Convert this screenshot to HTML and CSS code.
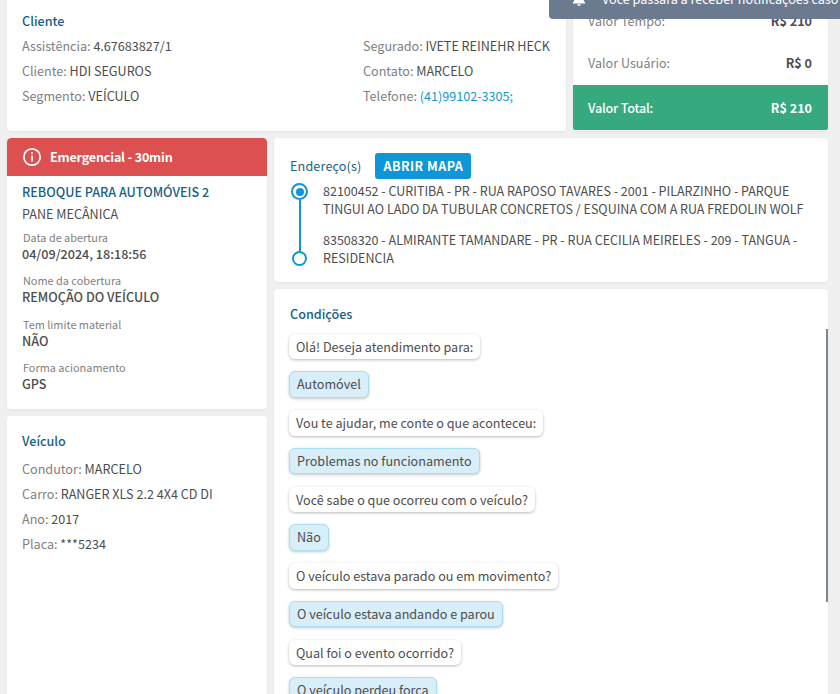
FILE: index.html
```html
<!DOCTYPE html>
<html lang="pt-BR">
<head>
<meta charset="utf-8">
<title>Atendimento</title>
<link rel="stylesheet" href="styles.css">
</head>
<body>
<div class="toast">
  <svg class="toast-icon" viewBox="0 0 16 16" width="14" height="14"><path fill="#fff" d="M8 0a1.2 1.2 0 0 0-1.2 1.2v.5A5 5 0 0 0 3 6.600c0 3.700-1.500 4.900-2 5.400v1h14v-1c-.5-.5-2-1.700-2-5.400a5 5 0 0 0-3.800-4.900v-.5A1.200 1.200 0 0 0 8 0zM6 14a2 2 0 0 0 4 0z"/></svg>
  <span class="toast-text">Você passará a receber notificações caso receba novos serviços</span>
</div>
<main class="page">
  <section class="row-top">
    <div class="card client">
      <h2 class="title">Cliente</h2>
      <div class="client-cols">
        <div class="list">
          <p class="line"><span class="lbl">Assistência:</span> 4.67683827/1</p>
          <p class="line"><span class="lbl">Cliente:</span> HDI SEGUROS</p>
          <p class="line"><span class="lbl">Segmento:</span> VEÍCULO</p>
        </div>
        <div class="list">
          <p class="line"><span class="lbl">Segurado:</span> IVETE REINEHR HECK</p>
          <p class="line"><span class="lbl">Contato:</span> MARCELO</p>
          <p class="line"><span class="lbl">Telefone:</span> <span class="phone">(41)99102-3305;</span></p>
        </div>
      </div>
    </div>
    <div class="card values">
      <div class="value-row"><span class="lbl">Valor Tempo:</span><strong>R$ 210</strong></div>
      <div class="value-row"><span class="lbl">Valor Usuário:</span><strong>R$ 0</strong></div>
      <div class="value-total"><span>Valor Total:</span><strong>R$ 210</strong></div>
    </div>
  </section>
  <section class="row-main">
    <div class="col-left">
      <div class="card service">
        <div class="urgent">
          <svg viewBox="0 0 20 20" width="20" height="20" fill="none" stroke="#fff" stroke-width="1.700"><circle cx="10" cy="10" r="8.200"/><path d="M10 9v5" stroke-linecap="round"/><circle cx="10" cy="6" r=".6" fill="#fff" stroke-width="1"/></svg>
          <span>Emergencial - 30min</span>
        </div>
        <div class="service-body">
          <h2 class="title">REBOQUE PARA AUTOMÓVEIS 2</h2>
          <p class="sub">PANE MECÂNICA</p>
          <div class="fields">
            <div class="field"><span class="field-lbl">Data de abertura</span><span class="field-val">04/09/2024, 18:18:56</span></div>
            <div class="field"><span class="field-lbl">Nome da cobertura</span><span class="field-val">REMOÇÃO DO VEÍCULO</span></div>
            <div class="field"><span class="field-lbl">Tem limite material</span><span class="field-val">NÃO</span></div>
            <div class="field"><span class="field-lbl">Forma acionamento</span><span class="field-val">GPS</span></div>
          </div>
        </div>
      </div>
      <div class="card vehicle">
        <h2 class="title">Veículo</h2>
        <div class="list">
          <p class="line"><span class="lbl">Condutor:</span> MARCELO</p>
          <p class="line"><span class="lbl">Carro:</span> RANGER XLS 2.2 4X4 CD DI</p>
          <p class="line"><span class="lbl">Ano:</span> 2017</p>
          <p class="line"><span class="lbl">Placa:</span> ***5234</p>
        </div>
      </div>
    </div>
    <div class="col-right">
      <div class="card address">
        <div class="address-head">
          <h2 class="title addr-title">Endereço(s)</h2>
          <button class="map-btn" type="button">ABRIR MAPA</button>
        </div>
        <div class="stops">
          <div class="stop first">
            <span class="dot dot-active"></span>
            <p>82100452 - CURITIBA - PR - RUA RAPOSO TAVARES - 2001 - PILARZINHO - PARQUE TINGUI AO LADO DA TUBULAR CONCRETOS / ESQUINA COM A RUA FREDOLIN WOLF</p>
          </div>
          <div class="stop">
            <span class="dot"></span>
            <p>83508320 - ALMIRANTE TAMANDARE - PR - RUA CECILIA MEIRELES - 209 - TANGUA - RESIDENCIA</p>
          </div>
        </div>
      </div>
      <div class="card conditions">
        <span class="scroll-thumb"></span>
        <h2 class="title">Condições</h2>
        <div class="chat">
          <span class="bubble">Olá! Deseja atendimento para:</span>
          <span class="bubble answer">Automóvel</span>
          <span class="bubble">Vou te ajudar, me conte o que aconteceu:</span>
          <span class="bubble answer">Problemas no funcionamento</span>
          <span class="bubble">Você sabe o que ocorreu com o veículo?</span>
          <span class="bubble answer">Não</span>
          <span class="bubble">O veículo estava parado ou em movimento?</span>
          <span class="bubble answer">O veículo estava andando e parou</span>
          <span class="bubble">Qual foi o evento ocorrido?</span>
          <span class="bubble answer">O veículo perdeu força</span>
        </div>
      </div>
    </div>
  </section>
</main>
</body>
</html>
```
FILE: styles.css
```css
* { box-sizing: border-box; }
html, body { margin: 0; height: 694px; overflow: hidden; }
body {
  background: #f0f0f0;
  font-family: "Noto Sans CJK SC", "Noto Sans", sans-serif;
  font-size: 12.6px;
  line-height: 20px;
  color: #4d4d4d;
}
p, h2 { margin: 0; }
.page { padding: 0 12px 0 7px; display: flex; flex-direction: column; gap: 7px; }
.card {
  background: #fff;
  border-radius: 4px;
  box-shadow: 0 1px 3px rgba(0,0,0,.06);
}
.title { font-size: 12.6px; font-weight: 500; line-height: 20px; color: #185f87; }
.lbl { color: #808080; }
.row-top { display: flex; gap: 7px; height: 131px; }
.client { width: 559px; padding: 11px 16px 0 15px; border-radius: 0 0 4px 4px; }
.client-cols { display: flex; justify-content: space-between; margin-top: 5px; }
.list { display: flex; flex-direction: column; gap: 5px; }
.phone { color: #0f9ad6; }
.values { flex: 1; display: flex; flex-direction: column; overflow: hidden; border-radius: 0 0 4px 4px; height: 131px; }
.value-row {
  display: flex; justify-content: space-between; align-items: center;
  height: 42px; padding: 0 16px 0 15px;
}
.value-row strong { font-weight: 700; color: #4d4d4d; }
.value-total {
  margin-top: 1px; height: 45px; background: #36a97f; color: #fff;
  display: flex; justify-content: space-between; align-items: center;
  padding: 0 16px 0 15px; font-weight: 500;
}
.value-total span { letter-spacing: -.2px; }
.value-total strong { font-weight: 700; }
.toast {
  position: absolute; top: 0; left: 549px; width: 291px; height: 19px; overflow: hidden;
  background: #6b7a8f; border-radius: 0 0 0 4px; color: #fff; white-space: nowrap;
  display: flex; align-items: flex-end; z-index: 5;
}
.toast-icon { margin: 0 16px 13px 23px; flex: none; }
.toast-text { margin-bottom: 10px; }
.row-main { display: flex; gap: 7px; }
.col-left { width: 260px; display: flex; flex-direction: column; gap: 7px; }
.col-right { flex: 1; display: flex; flex-direction: column; gap: 7px; }
.urgent {
  height: 38px; background: #dc5050; color: #fff; border-radius: 4px 4px 0 0;
  display: flex; align-items: center; gap: 8px; padding: 0 0 0 15px;
  font-weight: 700; letter-spacing: -.2px;
}
.service-body { padding: 6px 15px 0; }
.sub { margin-top: 2px; }
.fields { display: flex; flex-direction: column; gap: 9.5px; margin-top: 5.500px; }
.field { display: flex; flex-direction: column; }
.field-lbl { font-size: 10.9px; line-height: 14px; color: #808080; padding-left: 1px; }
.field-val { font-weight: 500; line-height: 20px; }
.service { height: 271px; overflow: hidden; }
.vehicle { height: 290px; padding: 15px 15px 0; }
.vehicle .list { margin-top: 8px; }
.address { height: 144px; padding: 15px 16px 0 15px; }
.address-head { display: flex; align-items: center; gap: 14px; }
.addr-title { font-weight: 400; padding-left: 1px; letter-spacing: .15px; }
.map-btn {
  height: 26px; padding: 0 8px; border: 0; border-radius: 3px; background: #0f96d6;
  color: #fff; font: 700 12.6px/26px "Noto Sans CJK SC", "Noto Sans", sans-serif; letter-spacing: .45px;
}
.stops { display: flex; flex-direction: column; gap: 13px; margin-top: 3px; }
.stop { position: relative; padding-left: 34px; }
.stop p { line-height: 18px; font-size: 12.53px; }
.dot {
  position: absolute; left: 3px; top: 20px; width: 15px; height: 15px;
  border: 2px solid #0f96d6; border-radius: 50%; background: #fff;
}
.dot-active { left: 2px; top: 1px; width: 17px; height: 17px; }
.dot-active::after {
  content: ""; position: absolute; left: 2.5px; top: 2.500px; width: 8px; height: 8px;
  border-radius: 50%; background: #0f96d6;
}
.first::after {
  content: ""; position: absolute; left: 9.500px; top: 18px; width: 2px; height: 51px; background: #0f96d6;
}
.conditions { position: relative; flex: 1; height: 420px; padding: 15px 15px 0; overflow: hidden; }
.conditions > .title { padding-left: 1px; }
.scroll-thumb { position: absolute; right: 0; top: 40px; width: 2px; height: 273px; background: #7a8796; }
.chat { display: flex; flex-direction: column; align-items: flex-start; gap: 12.25px; margin-top: 9.500px; }
.bubble {
  height: 25.5px; padding: 0 7px; border-radius: 6px; background: #fff; line-height: 25px; white-space: nowrap;
  box-shadow: 0 1px 3px rgba(0,0,0,.28);
}
.answer {
  height: 26.5px; background: #d8eef8; border: 1px solid #aadcf2; line-height: 24px;
  box-shadow: 0 1px 3px rgba(0,0,0,.22);
}
```
